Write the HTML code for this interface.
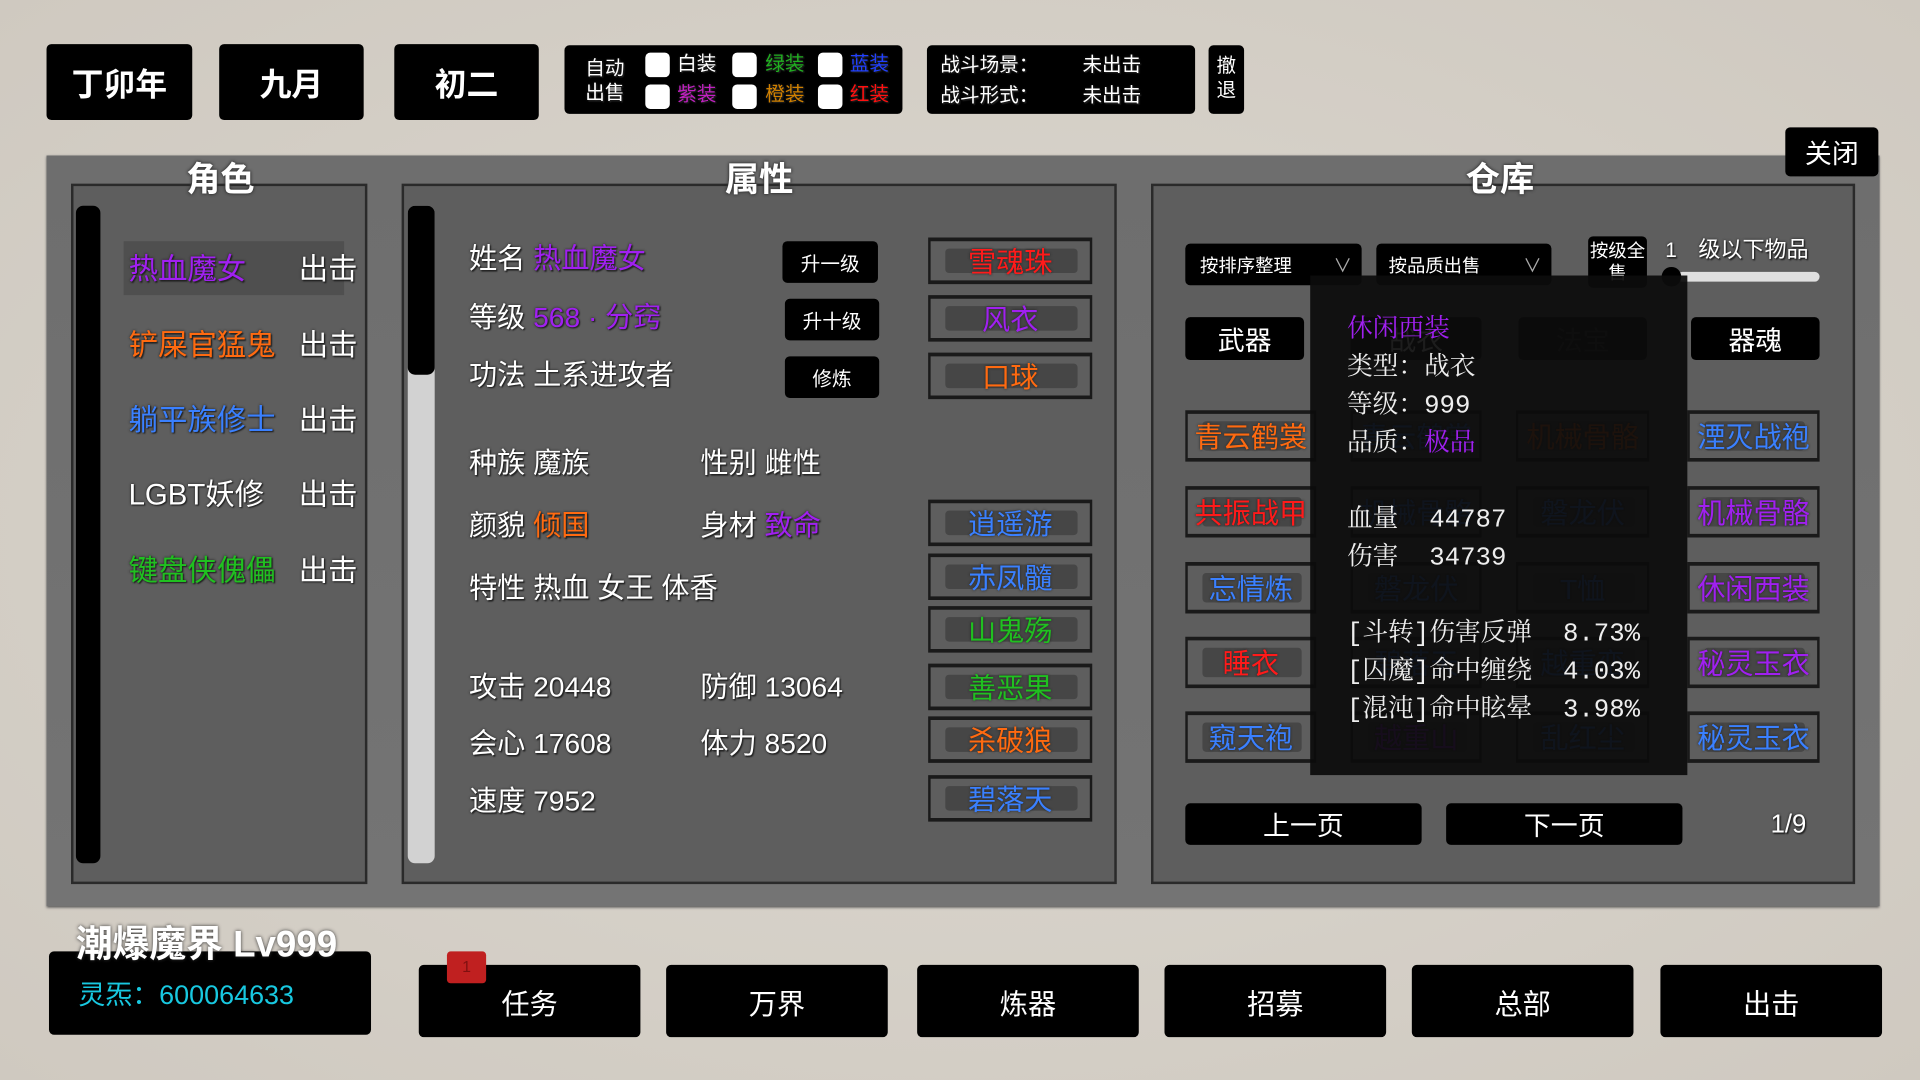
<!DOCTYPE html>
<html><head><meta charset="utf-8"><style>
html,body{margin:0;padding:0;width:1920px;height:1080px;overflow:hidden;background:#d8d3cb;}
#s{position:absolute;left:0;top:0;width:1568px;height:882px;transform:scale(1.22449);transform-origin:0 0;font-family:"Liberation Sans","Noto Sans CJK SC",sans-serif;color:#fff;background:radial-gradient(ellipse at 50% 50%,#dcd8d0,#cfc9c0);}
.a{position:absolute;box-sizing:border-box;}
.b{background:#000;border-radius:4px;display:flex;align-items:center;justify-content:center;}
.t{position:absolute;white-space:nowrap;line-height:1;text-shadow:0 0 2px #222,1px 1px 1px #222;}
.pn{position:absolute;background:#5e5e5e;border:2px solid #2a2a2a;box-sizing:border-box;}
.ttl{position:absolute;font-weight:bold;font-size:28px;line-height:1;text-shadow:0 0 3px #333,0 0 2px #333;}
.slot{position:absolute;width:134px;height:38px;border-top:3px solid #1a1a1a;border-bottom:3px solid #1a1a1a;border-left:2px solid #1a1a1a;border-right:2px solid #1a1a1a;box-sizing:border-box;}
.slot i{position:absolute;left:12px;right:10px;top:6px;bottom:6px;background:#464646;border-radius:3px;}
.slot span{position:absolute;left:0;right:0;top:6px;text-align:center;font-size:23px;line-height:1;text-shadow:0 0 2px #222;}
.cb{position:absolute;width:20px;height:20px;background:#fff;border-radius:4px;}
.sm{font-size:16px;}
.tip div{height:31px;}
</style></head><body><div id="s">
<div class="a b" style="left:38px;top:36px;width:119px;height:62px;font-size:26px;font-weight:bold">丁卯年</div>
<div class="a b" style="left:179px;top:36px;width:118px;height:62px;font-size:26px;font-weight:bold">九月</div>
<div class="a b" style="left:322px;top:36px;width:118px;height:62px;font-size:26px;font-weight:bold">初二</div>
<div class="a b" style="left:461px;top:37px;width:276px;height:56px;"></div>
<div class="t" style="left:478px;top:47px;font-size:16px;line-height:20px">自动<br>出售</div>
<div class="cb" style="left:527px;top:43px"></div><div class="cb" style="left:527px;top:69px"></div>
<div class="cb" style="left:598px;top:43px"></div><div class="cb" style="left:598px;top:69px"></div>
<div class="cb" style="left:668px;top:43px"></div><div class="cb" style="left:668px;top:69px"></div>
<div class="t sm" style="left:553px;top:45px;color:#fff">白装</div>
<div class="t sm" style="left:553px;top:70px;color:#c020c0">紫装</div>
<div class="t sm" style="left:625px;top:45px;color:#20b020">绿装</div>
<div class="t sm" style="left:625px;top:70px;color:#d08000">橙装</div>
<div class="t sm" style="left:694px;top:45px;color:#2040ff">蓝装</div>
<div class="t sm" style="left:694px;top:70px;color:#ff1010">红装</div>
<div class="a b" style="left:757px;top:37px;width:219px;height:56px;"></div>
<div class="t sm" style="left:768px;top:46px">战斗场景：</div><div class="t sm" style="left:884px;top:46px">未出击</div>
<div class="t sm" style="left:768px;top:71px">战斗形式：</div><div class="t sm" style="left:884px;top:71px">未出击</div>
<div class="a b" style="left:987px;top:37px;width:29px;height:56px;font-size:16px;line-height:20px;text-align:center">撤<br>退</div>
<div class="a" style="left:38px;top:127px;width:1497px;height:613px;background:linear-gradient(#6e6e6e,#747474);box-shadow:0 1px 2px #555"></div>
<div class="a b" style="left:1458px;top:104px;width:76px;height:40px;font-size:22px">关闭</div>
<div class="pn" style="left:58px;top:150px;width:242px;height:572px"></div>
<div class="pn" style="left:328px;top:150px;width:584px;height:572px"></div>
<div class="pn" style="left:940px;top:150px;width:575px;height:572px"></div>
<div class="ttl" style="left:152px;top:133px">角色</div>
<div class="ttl" style="left:592px;top:133px">属性</div>
<div class="ttl" style="left:1197px;top:133px">仓库</div>
<div class="a" style="left:62px;top:168px;width:20px;height:537px;background:#000;border-radius:6px"></div>
<div class="a" style="left:101px;top:197px;width:180px;height:44px;background:#4f4f4f"></div>
<div class="t" style="left:105px;top:209px;font-size:24px;color:#a020f0">热血魔女</div>
<div class="t" style="left:105px;top:271px;font-size:24px;color:#ff6a10">铲屎官猛鬼</div>
<div class="t" style="left:105px;top:332px;font-size:24px;color:#3a80ff">躺平族修士</div>
<div class="t" style="left:105px;top:393px;font-size:24px;color:#fff">LGBT妖修</div>
<div class="t" style="left:105px;top:455px;font-size:24px;color:#20c020">键盘侠傀儡</div>
<div class="t" style="left:244px;top:209px;font-size:24px">出击</div>
<div class="t" style="left:244px;top:271px;font-size:24px">出击</div>
<div class="t" style="left:244px;top:332px;font-size:24px">出击</div>
<div class="t" style="left:244px;top:393px;font-size:24px">出击</div>
<div class="t" style="left:244px;top:455px;font-size:24px">出击</div>
<div class="a" style="left:333px;top:168px;width:22px;height:537px;background:#d2d2d2;border-radius:6px"></div>
<div class="a" style="left:333px;top:168px;width:22px;height:138px;background:#000;border-radius:6px"></div>
<div class="t" style="left:383px;top:200px;font-size:23px">姓名 <span style="color:#a020f0">热血魔女</span></div>
<div class="t" style="left:383px;top:248px;font-size:23px">等级 <span style="color:#a020f0">568 · 分窍</span></div>
<div class="t" style="left:383px;top:295px;font-size:23px">功法 土系进攻者</div>
<div class="t" style="left:383px;top:367px;font-size:23px">种族 魔族</div>
<div class="t" style="left:572px;top:367px;font-size:23px">性别 雌性</div>
<div class="t" style="left:383px;top:418px;font-size:23px">颜貌 <span style="color:#ff6a10">倾国</span></div>
<div class="t" style="left:572px;top:418px;font-size:23px">身材 <span style="color:#a020f0">致命</span></div>
<div class="t" style="left:383px;top:469px;font-size:23px">特性 热血 女王 体香</div>
<div class="t" style="left:383px;top:550px;font-size:23px">攻击 20448</div>
<div class="t" style="left:572px;top:550px;font-size:23px">防御 13064</div>
<div class="t" style="left:383px;top:596px;font-size:23px">会心 17608</div>
<div class="t" style="left:572px;top:596px;font-size:23px">体力 8520</div>
<div class="t" style="left:383px;top:643px;font-size:23px">速度 7952</div>
<div class="a b" style="left:639px;top:197px;width:78px;height:34px;font-size:16px">升一级</div>
<div class="a b" style="left:641px;top:244px;width:77px;height:34px;font-size:16px">升十级</div>
<div class="a b" style="left:641px;top:291px;width:77px;height:34px;font-size:16px">修炼</div>
<div class="slot" style="left:758px;top:194px"><i></i><span style="color:#ff1a1a">雪魂珠</span></div>
<div class="slot" style="left:758px;top:241px"><i></i><span style="color:#a020f0">风衣</span></div>
<div class="slot" style="left:758px;top:288px"><i></i><span style="color:#ff6a10">口球</span></div>
<div class="slot" style="left:758px;top:408px"><i></i><span style="color:#3a80ff">逍遥游</span></div>
<div class="slot" style="left:758px;top:452px"><i></i><span style="color:#3a80ff">赤凤髓</span></div>
<div class="slot" style="left:758px;top:495px"><i></i><span style="color:#20c020">山鬼殇</span></div>
<div class="slot" style="left:758px;top:542px"><i></i><span style="color:#20c020">善恶果</span></div>
<div class="slot" style="left:758px;top:585px"><i></i><span style="color:#ff6a10">杀破狼</span></div>
<div class="slot" style="left:758px;top:633px"><i></i><span style="color:#3a80ff">碧落天</span></div>
<div class="a b" style="left:968px;top:199px;width:144px;height:34px;font-size:15px;justify-content:flex-start;padding-left:12px">按排序整理<span style="position:absolute;right:8px;color:#aaa">∨</span></div>
<div class="a b" style="left:1124px;top:199px;width:143px;height:34px;font-size:15px;justify-content:flex-start;padding-left:10px">按品质出售<span style="position:absolute;right:8px;color:#aaa">∨</span></div>
<div class="a b" style="left:1297px;top:193px;width:48px;height:42px;font-size:15px;line-height:18px;align-items:flex-start;padding-top:4px;overflow:hidden;text-align:center">按级全售</div>
<div class="t" style="left:1360px;top:196px;font-size:17px">1</div>
<div class="t" style="left:1387px;top:195px;font-size:18px">级以下物品</div>
<div class="a" style="left:1370px;top:222px;width:116px;height:8px;background:#e0e0e0;border-radius:4px"></div>
<div class="a" style="left:1357px;top:218px;width:16px;height:16px;background:#000;border-radius:8px"></div>
<div class="a b" style="left:968px;top:259px;width:97px;height:35px;font-size:22px">武器</div>
<div class="a b" style="left:1103px;top:259px;width:107px;height:35px;font-size:22px">战衣</div>
<div class="a b" style="left:1240px;top:259px;width:105px;height:35px;font-size:22px;color:#333">法宝</div>
<div class="a b" style="left:1381px;top:259px;width:105px;height:35px;font-size:22px">器魂</div>
<div class="slot" style="left:968px;top:335px;width:107px;height:42px"><i></i><span style="color:#ff6a10;top:8px">青云鹤裳</span></div>
<div class="slot" style="left:968px;top:397px;width:107px;height:42px"><i></i><span style="color:#ff1a1a;top:8px">共振战甲</span></div>
<div class="slot" style="left:968px;top:459px;width:107px;height:42px"><i></i><span style="color:#3a80ff;top:8px">忘情炼</span></div>
<div class="slot" style="left:968px;top:520px;width:107px;height:42px"><i></i><span style="color:#ff1a1a;top:8px">睡衣</span></div>
<div class="slot" style="left:968px;top:581px;width:107px;height:42px"><i></i><span style="color:#3a80ff;top:8px">窥天袍</span></div>
<div class="slot" style="left:1103px;top:335px;width:107px;height:42px"><i></i><span style="color:#3a80ff;top:8px">青云鹤裳</span></div>
<div class="slot" style="left:1103px;top:397px;width:107px;height:42px"><i></i><span style="color:#3a80ff;top:8px">机械骨骼</span></div>
<div class="slot" style="left:1103px;top:459px;width:107px;height:42px"><i></i><span style="color:#3a80ff;top:8px">磐龙伏</span></div>
<div class="slot" style="left:1103px;top:520px;width:107px;height:42px"><i></i><span style="color:#3a80ff;top:8px">碧落天</span></div>
<div class="slot" style="left:1103px;top:581px;width:107px;height:42px"><i></i><span style="color:#a020f0;top:8px">越重山</span></div>
<div class="slot" style="left:1238px;top:335px;width:109px;height:42px"><i></i><span style="color:#ff6a10;top:8px">机械骨骼</span></div>
<div class="slot" style="left:1238px;top:397px;width:109px;height:42px"><i></i><span style="color:#3a80ff;top:8px">磐龙伏</span></div>
<div class="slot" style="left:1238px;top:459px;width:109px;height:42px"><i></i><span style="color:#3a80ff;top:8px">T恤</span></div>
<div class="slot" style="left:1238px;top:520px;width:109px;height:42px"><i></i><span style="color:#3a80ff;top:8px">越重峦</span></div>
<div class="slot" style="left:1238px;top:581px;width:109px;height:42px"><i></i><span style="color:#3a80ff;top:8px">乱红尘</span></div>
<div class="slot" style="left:1378px;top:335px;width:108px;height:42px"><i></i><span style="color:#3a80ff;top:8px">湮灭战袍</span></div>
<div class="slot" style="left:1378px;top:397px;width:108px;height:42px"><i></i><span style="color:#a020f0;top:8px">机械骨骼</span></div>
<div class="slot" style="left:1378px;top:459px;width:108px;height:42px"><i></i><span style="color:#a020f0;top:8px">休闲西装</span></div>
<div class="slot" style="left:1378px;top:520px;width:108px;height:42px"><i></i><span style="color:#a020f0;top:8px">秘灵玉衣</span></div>
<div class="slot" style="left:1378px;top:581px;width:108px;height:42px"><i></i><span style="color:#3a80ff;top:8px">秘灵玉衣</span></div>
<div class="a b" style="left:968px;top:656px;width:193px;height:34px;font-size:22px">上一页</div>
<div class="a b" style="left:1181px;top:656px;width:193px;height:34px;font-size:22px">下一页</div>
<div class="t" style="left:1446px;top:663px;font-size:21px">1/9</div>
<div class="a" style="left:1070px;top:225px;width:308px;height:408px;background:rgba(12,12,12,0.93)"></div>
<div class="tip" style="position:absolute;left:1100px;top:255px;font-size:21px;line-height:31px;font-family:'Liberation Mono','Noto Serif CJK SC',monospace;color:#eee;white-space:pre"><div style="color:#a020f0">休闲西装</div><div>类型：战衣</div><div>等级：999</div><div>品质：<span style="color:#a020f0">极品</span></div><div></div><div>血量  44787</div><div>伤害  34739</div><div></div><div>[斗转]伤害反弹  8.73%</div><div>[囚魔]命中缠绕  4.03%</div><div>[混沌]命中眩晕  3.98%</div></div>
<div class="a b" style="left:40px;top:777px;width:263px;height:68px"></div>
<div class="t" style="left:62px;top:757px;font-size:30px;font-weight:bold;text-shadow:0 0 3px #333">潮爆魔界 Lv999</div>
<div class="t" style="left:64px;top:802px;font-size:22px;color:#18c8e0;text-shadow:none">灵炁：600064633</div>
<div class="a b" style="left:342px;top:788px;width:181px;height:59px;font-size:23px">任务</div>
<div class="a b" style="left:544px;top:788px;width:181px;height:59px;font-size:23px">万界</div>
<div class="a b" style="left:749px;top:788px;width:181px;height:59px;font-size:23px">炼器</div>
<div class="a b" style="left:951px;top:788px;width:181px;height:59px;font-size:23px">招募</div>
<div class="a b" style="left:1153px;top:788px;width:181px;height:59px;font-size:23px">总部</div>
<div class="a b" style="left:1356px;top:788px;width:181px;height:59px;font-size:23px">出击</div>
<div class="a" style="left:365px;top:777px;width:32px;height:26px;background:#c02020;border-radius:3px;color:#801010;font-size:13px;text-align:center;line-height:26px">1</div>
</div></body></html>
